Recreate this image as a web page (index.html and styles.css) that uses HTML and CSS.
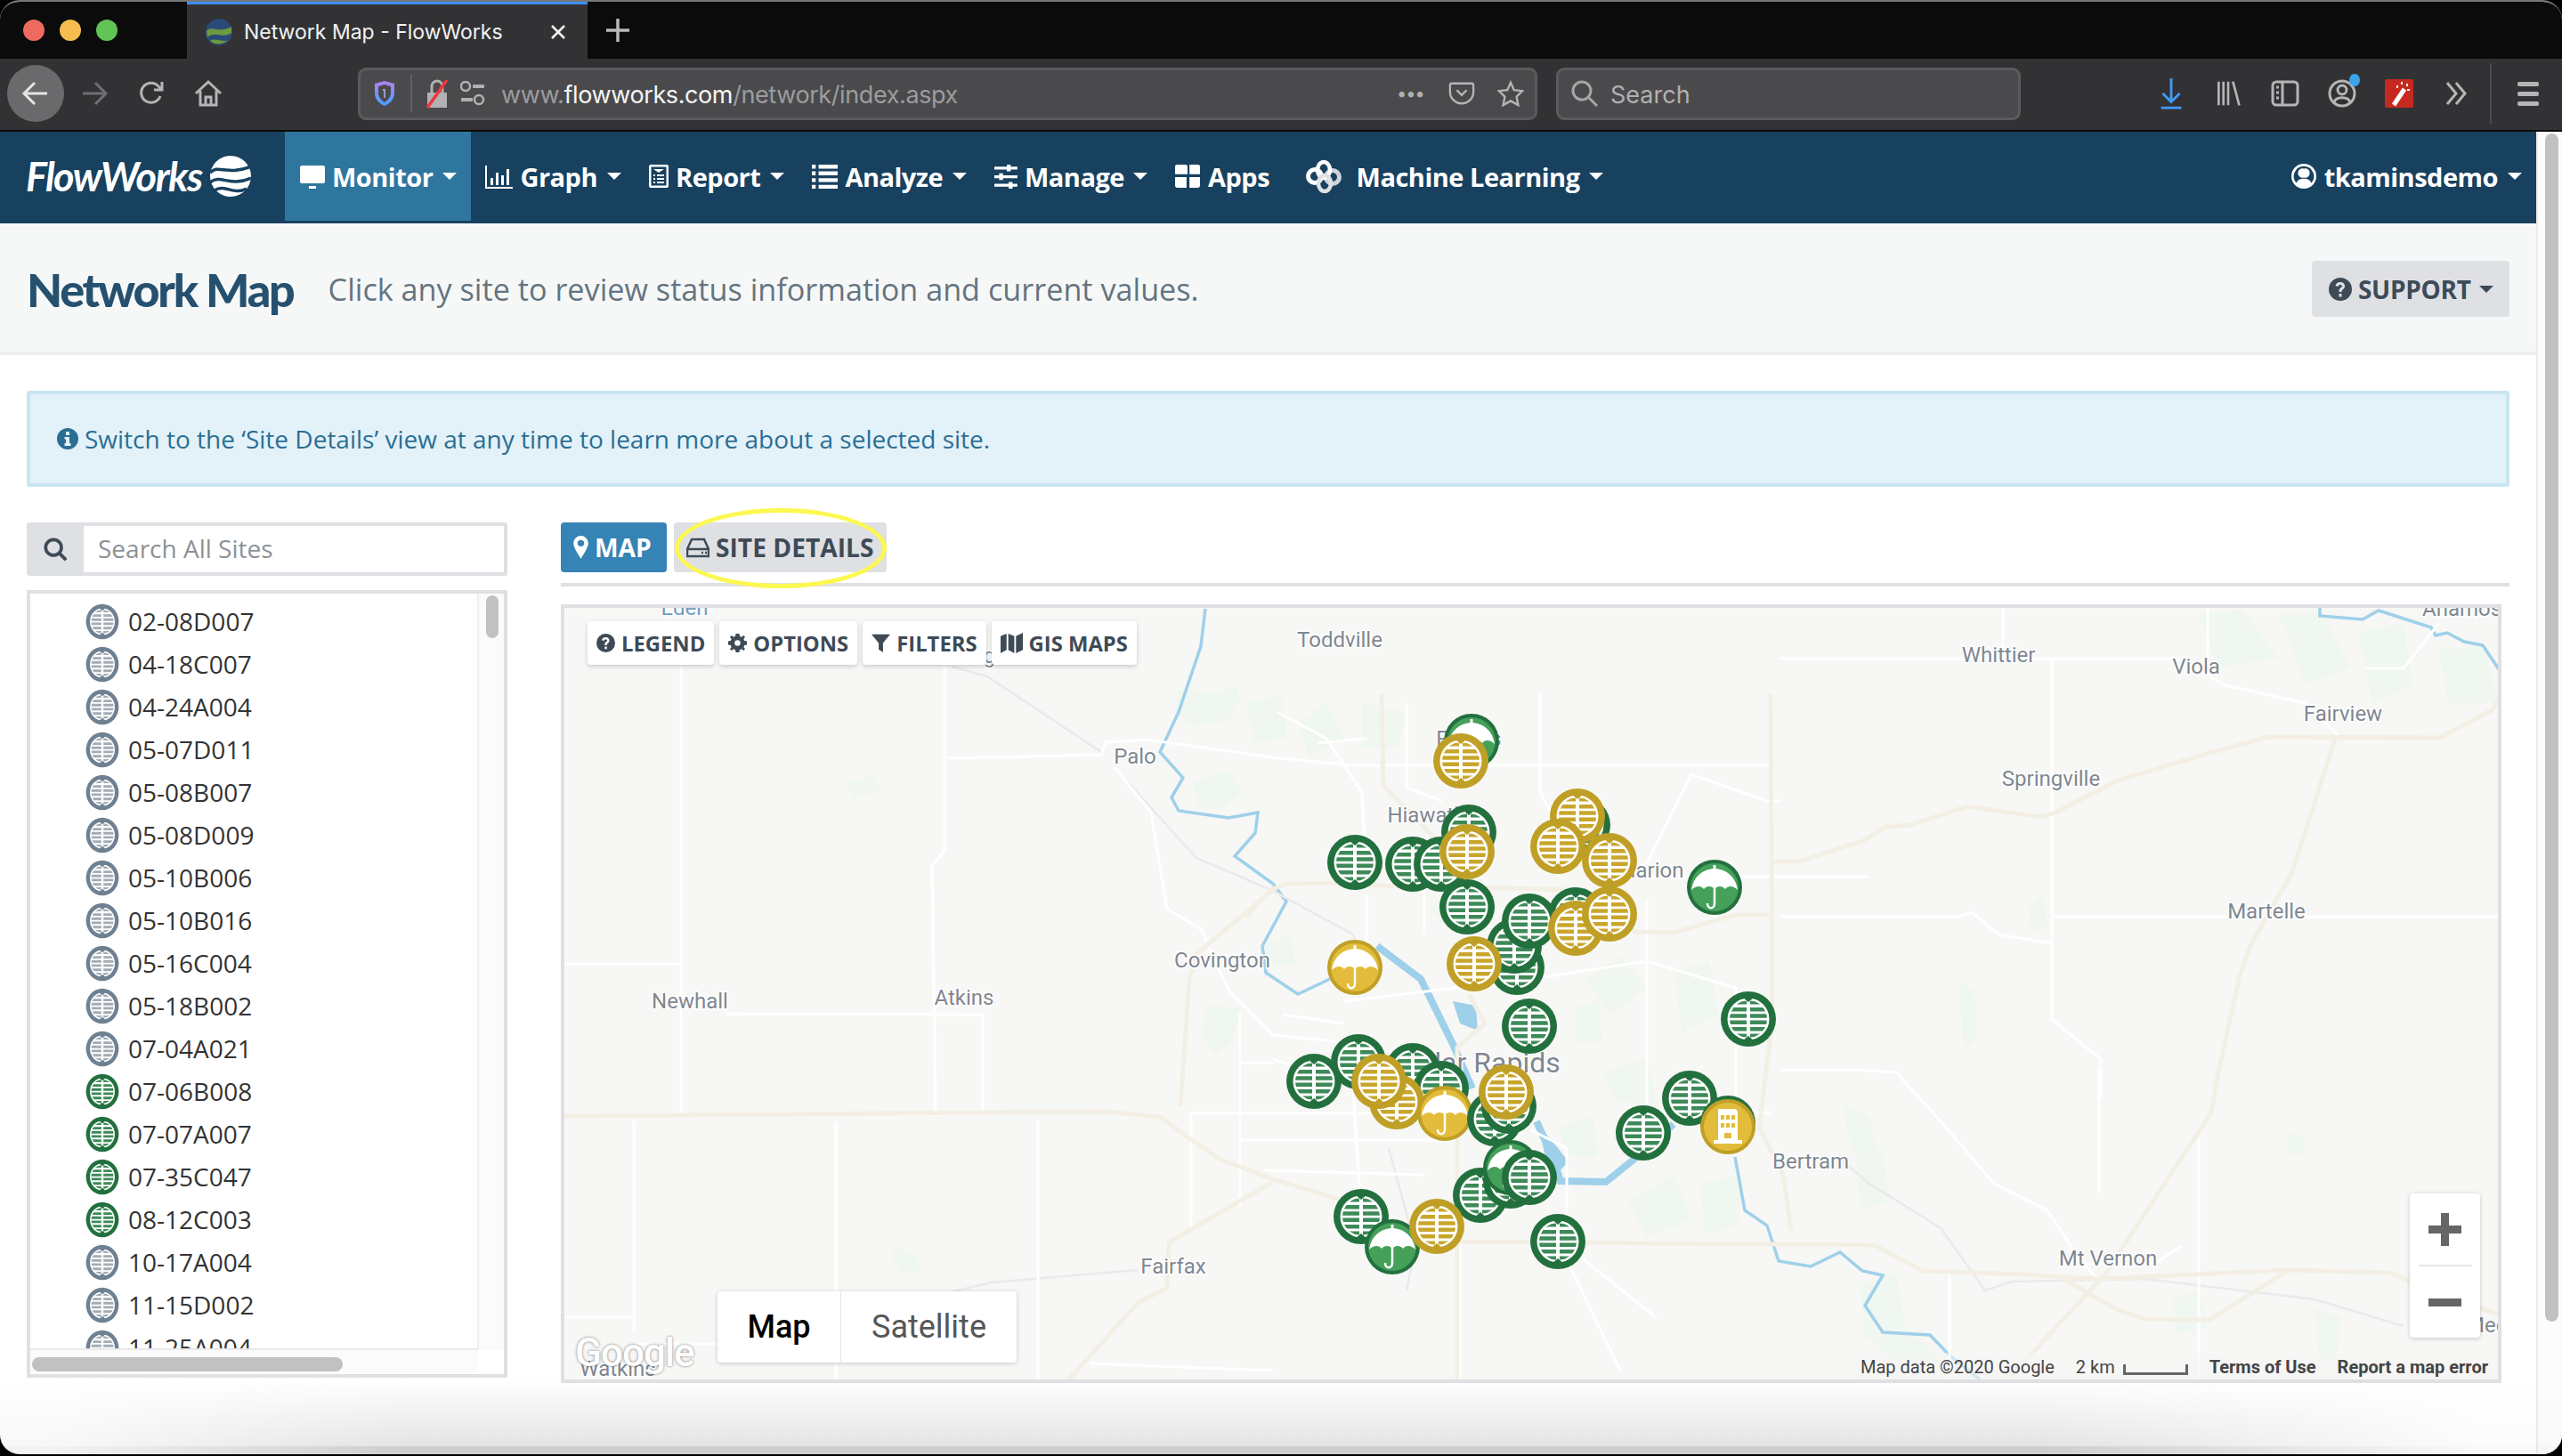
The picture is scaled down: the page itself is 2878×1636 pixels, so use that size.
FILE: index.html
```html
<!DOCTYPE html>
<html lang="en">
<head>
    <meta charset="UTF-8">
    <title>Network Map - FlowWorks</title>
    <link rel="stylesheet" href="styles.css">
</head>
<body>
<svg class="svg-defs" aria-hidden="true">
    <defs>
        <clipPath id="pin-clip"><circle r="21"/></clipPath>
        <g id="pin-grid">
            <circle class="pin-ring" r="31"/>
            <circle class="pin-face" r="23.500"/>
            <path class="pin-ring" d="M-7-25L0-19L7-25ZM-7 25L0 19L7 25Z"/>
            <g class="pin-bar" clip-path="url(#pin-clip)">
                <path d="M-22-20.500h20v4h-20zM2-20.500h20v4h-20zM-22-13h20v4.500h-20zM2-13h20v4.500h-20zM-22-5.700h20v4.500h-20zM2-5.700h20v4.500h-20zM-22 1.500h20v4.500h-20zM2 1.500h20v4.500h-20zM-22 9h20v4.500h-20zM2 9h20v4.500h-20zM-22 16.500h20v4h-20zM2 16.500h20v4h-20z"/>
            </g>
        </g>
        <g id="pin-umbrella">
            <circle class="pin-ring" r="31"/>
            <circle class="pin-fill" r="27"/>
            <path class="pin-face" d="M-1.500-25h3v4C13-20 24-12 26 3C21-2 15-2 12 2C9-2 3-2 0 2C-3-2-9-2-12 2C-15-2-21-2-26 3C-24-12-13-20-1.500-21Z"/>
            <path class="pin-handle" d="M0 0V18C0 25-8 25-8 18"/>
        </g>
        <g id="pin-building">
            <circle class="pin-ring" r="31"/>
            <circle class="pin-fill" r="27"/>
            <path class="pin-face" d="M-11-20H9L11-17V15H16V19H-16V15H-11Z"/>
            <path class="pin-fill" d="M-8-13h4v5h-4zM-2-13h4v5h-4zM4-13h4v5h-4zM-8-4h4v5h-4zM-2-4h4v5h-4zM4-4h4v5h-4zM-4 7h8v6h-8z"/>
        </g>
    </defs>
</svg>

<div class="window">
    <!-- browser chrome -->
    <div class="tabstrip">
        <div class="traffic">
            <span class="light red"></span>
            <span class="light amber"></span>
            <span class="light green"></span>
        </div>
        <div class="tab">
            <svg class="favicon" viewBox="0 0 32 32">
                <circle cx="16" cy="16" r="15" fill="#2b4a78"/>
                <path d="M2 15C8 8 14 18 30 10V17C20 24 10 14 3 22Z" fill="#6d9a3e"/>
                <path d="M6 26C12 22 20 28 26 25A15 15 0 0 1 6 26Z" fill="#6d9a3e"/>
            </svg>
            <span class="tab-title">Network Map - FlowWorks</span>
            <svg class="tab-close" viewBox="0 0 18 18"><path d="M2 2L16 16M16 2L2 16"/></svg>
        </div>
        <svg class="tab-new" viewBox="0 0 28 28"><path d="M14 1V27M1 14H27"/></svg>
    </div>

    <div class="toolbar">
        <div class="tb-btn back">
            <svg viewBox="0 0 32 32" class="tb-icon white"><path d="M29 16H4M15 4L3 16L15 28"/></svg>
        </div>
        <div class="tb-btn">
            <svg viewBox="0 0 32 32" class="tb-icon dim"><path d="M3 16H28M17 4L29 16L17 28"/></svg>
        </div>
        <div class="tb-btn">
            <svg viewBox="0 0 32 32" class="tb-icon"><path d="M26 19A11 11 0 1 1 24 8L28 12M28 3V12H19"/></svg>
        </div>
        <div class="tb-btn">
            <svg viewBox="0 0 32 32" class="tb-icon"><path d="M2 16L16 3L30 16M7 13V29H25V13M13 29V20H19V29"/></svg>
        </div>

        <div class="urlbar">
            <svg class="url-shield" viewBox="0 0 24 30">
                <defs><linearGradient id="shield-grad" x1="0" y1="0" x2="0" y2="1"><stop offset="0" stop-color="#b083f0"/><stop offset="1" stop-color="#45a1ff"/></linearGradient></defs>
                <path d="M12 1L23 4V15C23 22 17 27 12 29C7 27 1 22 1 15V4Z" fill="url(#shield-grad)"/>
                <path d="M12 5L19 7V15C19 19 15 23 12 25C9 23 5 19 5 15V7Z" fill="#4a4a4c"/>
                <path d="M10 10H13V20H11V12H10Z" fill="#9a9ac8"/>
            </svg>
            <span class="url-sep"></span>
            <svg class="url-lock" viewBox="0 0 28 36">
                <path d="M3 17H25V34H3Z" fill="#b1b1b3"/>
                <path d="M8 17V10A6 6 0 0 1 20 10V17" fill="none" stroke="#b1b1b3" stroke-width="3"/>
                <path d="M3 34L25 3" stroke="#f0353d" stroke-width="3.500"/>
            </svg>
            <svg class="url-perm" viewBox="0 0 28 28">
                <circle cx="6" cy="6" r="5" fill="none" stroke="#b1b1b3" stroke-width="2.500"/>
                <rect x="14" y="4" width="13" height="4" rx="1" fill="#b1b1b3"/>
                <rect x="1" y="19" width="13" height="4" rx="1" fill="#b1b1b3"/>
                <circle cx="21" cy="21" r="5" fill="none" stroke="#b1b1b3" stroke-width="2.500"/>
            </svg>
            <span class="url-text">www.<b>flowworks.com</b>/network/index.aspx</span>
            <span class="url-dots">•••</span>
            <svg class="url-icon pocket" viewBox="0 0 32 32"><path d="M4 4H28A2 2 0 0 1 30 6V14A14 14 0 0 1 2 14V6A2 2 0 0 1 4 4ZM10 12L16 18L22 12"/></svg>
            <svg class="url-icon star" viewBox="0 0 32 32"><path d="M16 3L20 12L30 13L23 20L25 30L16 25L7 30L9 20L2 13L12 12Z"/></svg>
        </div>

        <div class="searchbar">
            <svg class="search-glass" viewBox="0 0 32 32"><circle cx="13" cy="13" r="10"/><path d="M20 20L30 30"/></svg>
            <span>Search</span>
        </div>

        <div class="tb-btn first-right">
            <svg viewBox="0 0 32 40" class="tb-icon blue"><path d="M16 2V30M6 20L16 30L26 20M4 37H28"/></svg>
        </div>
        <div class="tb-btn">
            <svg viewBox="0 0 32 36" class="tb-icon thin"><path d="M4 3V33M10 3V33M16 3V33M22 3L30 33"/></svg>
        </div>
        <div class="tb-btn">
            <svg viewBox="0 0 32 32" class="tb-icon thin"><rect x="2" y="3" width="28" height="26" rx="4"/><path d="M13 3V29M6 9H9M6 15H9M6 21H9"/></svg>
        </div>
        <div class="tb-btn account">
            <svg viewBox="0 0 32 32" class="tb-icon thin"><circle cx="16" cy="16" r="14"/><circle cx="16" cy="12" r="5"/><path d="M7 26C9 19 23 19 25 26"/></svg>
            <span class="account-dot"></span>
        </div>
        <div class="tb-btn">
            <svg viewBox="0 0 32 32" class="ext-icon">
                <rect width="32" height="32" rx="2" fill="#c6291f"/>
                <path d="M10 29L22 11" stroke="#fff" stroke-width="5"/>
                <path d="M19 3V6M25 5V8M14 7V10M28 12H25" stroke="#fff" stroke-width="2"/>
            </svg>
        </div>
        <div class="tb-btn">
            <svg viewBox="0 0 32 32" class="tb-icon"><path d="M6 4L16 16L6 28M16 4L26 16L16 28"/></svg>
        </div>
        <span class="tb-sep"></span>
        <div class="tb-btn menu">
            <span class="bar"></span><span class="bar"></span><span class="bar"></span>
        </div>
    </div>

    <div class="page-wrap">
        <div class="page">
            <nav class="navbar">
                <a class="brand">
                    <span class="brand-text">FlowWorks</span>
                    <svg class="brand-globe" viewBox="0 0 46 46">
                        <circle cx="23" cy="23" r="23" fill="#fff"/>
                        <path d="M0 19C10 9 18 23 46 12M0 30C12 20 22 36 46 25M5 39C16 31 26 45 41 37" fill="none" stroke="#18415f" stroke-width="3.500"/>
                    </svg>
                </a>
                <a class="nav-item active">
                    <svg viewBox="0 0 28 28"><path d="M2 2H26A2 2 0 0 1 28 4V20A2 2 0 0 1 26 22H2A2 2 0 0 1 0 20V4A2 2 0 0 1 2 2ZM10 25H18V28H10Z"/></svg>
                    <span>Monitor</span><i class="caret"></i>
                </a>
                <a class="nav-item">
                    <svg viewBox="0 0 31 28"><path d="M0 2H2V26H31V28H0ZM6 16H9V24H6ZM12 10H15V24H12ZM18 13H21V24H18ZM24 6H27V24H24Z"/></svg>
                    <span>Graph</span><i class="caret"></i>
                </a>
                <a class="nav-item">
                    <svg viewBox="0 0 22 28"><path fill-rule="evenodd" d="M2 1H20A2 2 0 0 1 22 3V25A2 2 0 0 1 20 27H2A2 2 0 0 1 0 25V3A2 2 0 0 1 2 1ZM2.500 3.500V24.500H19.500V3.500ZM5 6H17L11 10ZM5 12H7V14H5ZM9 12H17V14H9ZM5 16H7V18H5ZM9 16H17V18H9ZM5 20H7V22H5ZM9 20H17V22H9Z"/></svg>
                    <span>Report</span><i class="caret"></i>
                </a>
                <a class="nav-item">
                    <svg viewBox="0 0 27 26"><path d="M0 1H4V5H0ZM7 1H27V5H7ZM0 8H4V12H0ZM7 8H27V12H7ZM0 15H4V19H0ZM7 15H27V19H7ZM0 22H4V26H0ZM7 22H27V26H7Z"/></svg>
                    <span>Analyze</span><i class="caret"></i>
                </a>
                <a class="nav-item">
                    <svg viewBox="0 0 24 26"><path d="M0 3H13V1H17V3H24V6H17V8H13V6H0ZM0 12H5V10H9V12H24V15H9V17H5V15H0ZM0 21H15V19H19V21H24V24H19V26H15V24H0Z"/></svg>
                    <span>Manage</span><i class="caret"></i>
                </a>
                <a class="nav-item apps">
                    <svg viewBox="0 0 26 26"><path d="M2 1H11A2 2 0 0 1 13 3V11H0V3A2 2 0 0 1 2 1ZM15 1H24A2 2 0 0 1 26 3V11H15ZM0 14H12V25H2A2 2 0 0 1 0 23ZM15 14H26V23A2 2 0 0 1 24 25H15Z"/></svg>
                    <span>Apps</span>
                </a>
                <a class="nav-item ml">
                    <svg viewBox="0 0 40 38" class="ml-icon">
                        <circle cx="10" cy="19" r="7.500" fill="none" stroke="#fff" stroke-width="5"/>
                        <circle cx="30" cy="20" r="7.500" fill="none" stroke="#cfd3d6" stroke-width="5"/>
                        <ellipse cx="20" cy="12" rx="7" ry="9" fill="none" stroke="#fff" stroke-width="4.500"/>
                        <ellipse cx="21" cy="27" rx="7" ry="9" fill="none" stroke="#dfe2e4" stroke-width="4.500"/>
                    </svg>
                    <span>Machine Learning</span><i class="caret"></i>
                </a>
                <a class="nav-item user">
                    <svg viewBox="0 0 30 30"><path fill-rule="evenodd" d="M15 0A15 15 0 1 1 15 30A15 15 0 1 1 15 0ZM15 3A12 12 0 0 0 6 23C8 19 11 18 15 18C19 18 22 19 24 23A12 12 0 0 0 15 3ZM15 6A5.500 5.500 0 1 1 15 16.500A5.500 5.500 0 1 1 15 6Z"/></svg>
                    <span>tkaminsdemo</span><i class="caret"></i>
                </a>
            </nav>

            <header class="page-header">
                <h1>Network Map</h1>
                <p class="page-sub">Click any site to review status information and current values.</p>
                <button class="support-btn">
                    <svg viewBox="0 0 26 26" class="btn-icon"><path fill-rule="evenodd" d="M13 0A13 13 0 1 1 13 26A13 13 0 1 1 13 0ZM13 5C9.500 5 8 7 7.500 9L10.500 10C11 8.500 11.500 8 13 8C14.500 8 15 8.800 15 9.500C15 11 11.500 11.500 11.500 15V16H14.500C14.500 13 18 13 18 9.500C18 7 16 5 13 5ZM11.500 18V21.500H14.500V18Z"/></svg>
                    <span>SUPPORT</span><i class="caret"></i>
                </button>
            </header>

            <main class="content">
                <div class="alert">
                    <svg viewBox="0 0 24 24" class="alert-icon"><path fill-rule="evenodd" d="M12 0A12 12 0 1 1 12 24A12 12 0 1 1 12 0ZM10 4V8H14V4ZM8.500 10V12.500H10V17H8.500V20H15.500V17H14V10Z"/></svg>
                    <span>Switch to the ‘Site Details’ view at any time to learn more about a selected site.</span>
                </div>

                <div class="columns">
                    <aside class="sidebar">
                        <div class="site-search">
                            <span class="site-search-addon">
                                <svg viewBox="0 0 28 28"><circle cx="12" cy="12" r="9.500"/><path d="M19 19L27 27"/></svg>
                            </span>
                            <input type="text" placeholder="Search All Sites">
                        </div>
                        <div class="site-box">
                            <ul class="site-list">
                                <li class="site gray"><svg viewBox="-32 -32 64 64" preserveAspectRatio="none"><use href="#pin-grid"/></svg>02-08D007</li>
                                <li class="site gray"><svg viewBox="-32 -32 64 64" preserveAspectRatio="none"><use href="#pin-grid"/></svg>04-18C007</li>
                                <li class="site gray"><svg viewBox="-32 -32 64 64" preserveAspectRatio="none"><use href="#pin-grid"/></svg>04-24A004</li>
                                <li class="site gray"><svg viewBox="-32 -32 64 64" preserveAspectRatio="none"><use href="#pin-grid"/></svg>05-07D011</li>
                                <li class="site gray"><svg viewBox="-32 -32 64 64" preserveAspectRatio="none"><use href="#pin-grid"/></svg>05-08B007</li>
                                <li class="site gray"><svg viewBox="-32 -32 64 64" preserveAspectRatio="none"><use href="#pin-grid"/></svg>05-08D009</li>
                                <li class="site gray"><svg viewBox="-32 -32 64 64" preserveAspectRatio="none"><use href="#pin-grid"/></svg>05-10B006</li>
                                <li class="site gray"><svg viewBox="-32 -32 64 64" preserveAspectRatio="none"><use href="#pin-grid"/></svg>05-10B016</li>
                                <li class="site gray"><svg viewBox="-32 -32 64 64" preserveAspectRatio="none"><use href="#pin-grid"/></svg>05-16C004</li>
                                <li class="site gray"><svg viewBox="-32 -32 64 64" preserveAspectRatio="none"><use href="#pin-grid"/></svg>05-18B002</li>
                                <li class="site gray"><svg viewBox="-32 -32 64 64" preserveAspectRatio="none"><use href="#pin-grid"/></svg>07-04A021</li>
                                <li class="site ok"><svg viewBox="-32 -32 64 64" preserveAspectRatio="none"><use href="#pin-grid"/></svg>07-06B008</li>
                                <li class="site ok"><svg viewBox="-32 -32 64 64" preserveAspectRatio="none"><use href="#pin-grid"/></svg>07-07A007</li>
                                <li class="site ok"><svg viewBox="-32 -32 64 64" preserveAspectRatio="none"><use href="#pin-grid"/></svg>07-35C047</li>
                                <li class="site ok"><svg viewBox="-32 -32 64 64" preserveAspectRatio="none"><use href="#pin-grid"/></svg>08-12C003</li>
                                <li class="site gray"><svg viewBox="-32 -32 64 64" preserveAspectRatio="none"><use href="#pin-grid"/></svg>10-17A004</li>
                                <li class="site gray"><svg viewBox="-32 -32 64 64" preserveAspectRatio="none"><use href="#pin-grid"/></svg>11-15D002</li>
                                <li class="site gray"><svg viewBox="-32 -32 64 64" preserveAspectRatio="none"><use href="#pin-grid"/></svg>11-25A004</li>
                            </ul>
                            <div class="list-vtrack"><span class="list-vthumb"></span></div>
                            <div class="list-htrack"><span class="list-hthumb"></span></div>
                        </div>
                    </aside>

                    <section class="map-col">
                        <div class="view-tabs">
                            <button class="view-tab primary">
                                <svg viewBox="0 0 18 28" class="btn-icon"><path fill-rule="evenodd" d="M9 0A9 9 0 0 1 18 9C18 15 11 24 9 28C7 24 0 15 0 9A9 9 0 0 1 9 0ZM9 5A4 4 0 1 0 9 13A4 4 0 1 0 9 5Z"/></svg>
                                <span>MAP</span>
                            </button>
                            <button class="view-tab">
                                <svg viewBox="0 0 26 24" class="btn-icon outline"><path d="M6 3H20L25 14V22H1V14ZM1 14H25M17 18H19M21 18H23"/></svg>
                                <span>SITE DETAILS</span>
                                <i class="highlight"></i>
                            </button>
                        </div>

                        <div class="map">
                            <svg class="map-canvas" viewBox="634 683 2172 867">
                                <!-- woods -->
                                <g class="woods">
                                    <path d="M1324 775L1368 778L1390 770L1392 790L1380 810L1340 815L1320 800Z"/>
                                    <path d="M1400 790L1440 780L1446 830L1410 835Z"/>
                                    <path d="M1340 880L1380 865L1395 890L1370 910L1345 905Z"/>
                                    <path d="M1420 1060L1450 1050L1455 1085L1425 1085Z"/>
                                    <path d="M1355 1130L1392 1132L1385 1170L1365 1185L1350 1165Z"/>
                                    <path d="M1460 810L1490 790L1510 830L1470 850Z"/>
                                    <path d="M1530 790L1580 800L1570 840L1530 840Z"/>
                                    <path d="M1605 1015L1650 1005L1650 1030L1620 1040Z"/>
                                    <path d="M1780 1100L1820 1075L1850 1110L1810 1140Z"/>
                                    <path d="M1880 1090L1920 1080L1930 1140L1890 1160Z"/>
                                    <path d="M1770 1130L1795 1125L1800 1170L1772 1172Z"/>
                                    <path d="M1800 1205L1850 1190L1862 1240L1815 1238Z"/>
                                    <path d="M1750 1265L1790 1255L1795 1300L1762 1300Z"/>
                                    <path d="M1830 1350L1880 1320L1900 1370L1850 1390Z"/>
                                    <path d="M1910 1330L1960 1320L1950 1380L1915 1385Z"/>
                                    <path d="M2085 1300L2115 1290L2122 1350L2090 1360Z"/>
                                    <path d="M2090 1445L2130 1430L2140 1490L2180 1530L2130 1530L2095 1500Z"/>
                                    <path d="M2200 1100L2218 1115L2220 1170L2206 1180Z"/>
                                    <path d="M2470 690L2520 685L2560 740L2490 750Z"/>
                                    <path d="M2560 690L2610 690L2640 750L2590 770Z"/>
                                    <path d="M2650 710L2700 700L2710 770L2665 790Z"/>
                                    <path d="M2740 730L2790 725L2806 790L2750 790Z"/>
                                    <path d="M2070 1240L2100 1255L2110 1300L2080 1295Z"/>
                                    <path d="M2570 1270L2590 1280L2585 1300L2570 1295Z"/>
                                    <path d="M2280 1020L2295 1005L2300 1040L2282 1048Z"/>
                                    <path d="M2440 1460L2470 1450L2480 1490L2445 1500Z"/>
                                    <path d="M2600 1470L2630 1480L2625 1530L2605 1525Z"/>
                                    <path d="M1000 1400L1030 1410L1036 1430L1010 1430Z"/>
                                    <path d="M950 880L980 872L990 890L960 896Z"/>
                                </g>
                                <!-- rivers -->
                                <g class="river">
                                    <path d="M1354 684L1349 726L1324 800L1303 845L1329 874L1316 896L1324 911L1380 919L1413 913L1410 936L1387 962L1430 993L1445 1013L1418 1063L1422 1093L1458 1117L1494 1100"/>
                                    <path class="wide" d="M1547 1063L1596 1100L1632 1173L1654 1223"/>
                                    <path class="wide" d="M1726 1260L1744 1300L1753 1327L1804 1328L1835 1303L1880 1263"/>
                                    <path d="M1949 1300L1960 1360L1985 1377L1998 1417L2034 1423L2067 1407L2092 1428L2115 1433L2095 1467L2115 1497L2168 1500L2190 1523L2224 1550"/>
                                    <path d="M2606 683L2606 692L2654 696L2672 686L2731 705L2736 714L2749 711L2768 721L2789 725L2807 752"/>
                                </g>
                                <path class="lake" d="M1632 1125L1658 1130L1660 1158L1640 1150ZM1728 1264L1750 1290L1762 1305L1750 1318L1736 1300Z"/>
                                <!-- local roads -->
                                <g class="road-gray">
                                    <path d="M1069 749L1109 760L1237 845"/>
                                    <path d="M1268 880L1344 964L1430 1001L1520 1050L1540 1100"/>
                                    <path d="M1063 1453L1114 1441L1278 1427"/>
                                    <path d="M2070 1305L2100 1330L2180 1380L2230 1450L2260 1440L2410 1437L2600 1460L2700 1490"/>
                                    <path d="M1560 1290L1590 1400L1580 1450"/>
                                </g>
                                <g class="road">
                                    <path d="M765 749V1251M1061 749V956L1047 973L1051 1251"/>
                                    <path d="M634 1083H765M816 1139L1104 1140V1248"/>
                                    <path d="M1062 852L1237 848L1242 834L1288 831L1430 851L1520 860H1990"/>
                                    <path d="M1252 862L1293 913L1311 1021L1349 1044L1380 1112L1430 1163L1500 1170"/>
                                    <path d="M712 1260V1498M939 1260V1555M1166 1260V1555"/>
                                    <path d="M634 1480H714M714 1510H806M1224 1532L1430 1540"/>
                                    <path d="M1338 1251V1379M1393 1138V1356M1393 1194H1430M1338 1251H1640M1393 1281H1640"/>
                                    <path d="M1430 1190L1520 1220L1530 1380M1420 1315L1600 1320M1440 1140L1510 1150"/>
                                    <path d="M1435 800L1490 830L1530 890L1535 1000M1480 835L1535 830M1580 790V885L1620 900"/>
                                    <path d="M1535 1005V1060M1600 1000V1050M1730 780V890L1760 950L1800 970L1850 985H2100"/>
                                    <path d="M1800 1000L1850 970L1900 870L1985 900H2000M1850 1010V1250H1990"/>
                                    <path d="M1510 1125L1720 1100L1850 1080L1950 1110L1950 1250"/>
                                    <path d="M1640 1395V1550M1750 1395L1820 1540M1720 1270L1760 1290V1400L1860 1480"/>
                                    <path d="M2250 683V740M2000 740H2446L2500 770L2590 790L2630 830M2480 683V740M2658 751H2700L2740 700M2305 740V1060"/>
                                    <path d="M2000 1030H2200L2215 1025L2245 1050L2305 1060M2305 1030H2806M2305 1060V1145L2335 1170L2360 1190V1235"/>
                                    <path d="M2000 1202H2080L2130 1205L2180 1260L2240 1330L2300 1360L2340 1420L2360 1440M2358 1200V1340"/>
                                    <path d="M2470 1280V1550M2190 1430V1550M2310 1410L2330 1420L2420 1420L2450 1400"/>
                                </g>
                                <!-- highways -->
                                <g class="highway">
                                    <path d="M634 1254L1242 1249L1303 1255L1349 1288L1369 1302L1430 1325L1503 1347L1600 1390L1641 1395L2106 1399L2160 1428L2274 1432L2358 1437L2571 1427L2683 1430L2806 1477"/>
                                    <path d="M1552 780L1554 883L1610 940L1652 1000M1400 1030L1427 1000L1445 993L1498 992L1552 995L1780 1000L1837 1047L1880 1048L1949 1028L1989 1028"/>
                                    <path d="M1430 1000L1344 1072L1336 1101L1326 1243"/>
                                    <path d="M1989 780L1991 1147L1976 1267L2003 1320L2012 1383"/>
                                    <path d="M1990 968H2021L2093 945L2118 929L2146 927L2210 906L2291 918L2307 914L2379 877L2482 846L2548 828L2741 829L2799 798L2818 768"/>
                                    <path d="M2624 828L2574 982L2529 1060L2516 1096L2493 1200L2484 1250L2364 1433L2308 1493L2274 1530L2252 1553"/>
                                    <path d="M2314 1435L2381 1473L2409 1482L2482 1483L2571 1427"/>
                                    <path d="M1650 1117L1668 1150L1637 1177L1637 1550"/>
                                    <path d="M1430 1328L1313 1396L1311 1447L1278 1464L1196 1555"/>
                                </g>

                                <!-- place names -->
                                <g class="place">
                                    <text x="769" y="691" class="water-name">Eden</text>
                                    <text x="1505" y="727">Toddville</text>
                                    <text x="1062" y="745">Shellsburg</text>
                                    <text x="2245" y="744">Whittier</text>
                                    <text x="2467" y="757">Viola</text>
                                    <text x="2632" y="810">Fairview</text>
                                    <text x="2721" y="692" class="start">Anamosa</text>
                                    <text x="2304" y="883">Springville</text>
                                    <text x="2546" y="1032">Martelle</text>
                                    <text x="1275" y="858">Palo</text>
                                    <text x="1650" y="838">Robins</text>
                                    <text x="1609" y="924">Hiawatha</text>
                                    <text x="1854" y="986">Marion</text>
                                    <text x="1373" y="1087">Covington</text>
                                    <text x="775" y="1133">Newhall</text>
                                    <text x="1083" y="1129">Atkins</text>
                                    <text x="1318" y="1431">Fairfax</text>
                                    <text x="2034" y="1313">Bertram</text>
                                    <text x="2368" y="1422">Mt Vernon</text>
                                    <text x="694" y="1546">Watkins</text>
                                    <text x="2770" y="1497" class="start">Mechanicsville</text>
                                    <text x="1658" y="1205" class="city">Cedar Rapids</text>
                                </g>

                                <!-- site pins -->
                                <g class="pin-green">
                                    <use href="#pin-umbrella" x="1653" y="833"/>
                                </g>
                                <g class="pin-gold"><use href="#pin-grid" x="1641" y="855"/></g>
                                <g class="pin-green">
                                    <use href="#pin-grid" x="1522" y="969"/>
                                    <use href="#pin-grid" x="1587" y="971"/>
                                    <use href="#pin-grid" x="1619" y="971"/>
                                    <use href="#pin-grid" x="1650" y="935"/>
                                    <use href="#pin-grid" x="1778" y="927"/>
                                </g>
                                <g class="pin-gold">
                                    <use href="#pin-grid" x="1648" y="957"/>
                                    <use href="#pin-grid" x="1772" y="917"/>
                                    <use href="#pin-grid" x="1750" y="951"/>
                                    <use href="#pin-grid" x="1808" y="967"/>
                                </g>
                                <g class="pin-green">
                                    <use href="#pin-grid" x="1648" y="1019"/>
                                    <use href="#pin-grid" x="1704" y="1087"/>
                                    <use href="#pin-grid" x="1701" y="1063"/>
                                    <use href="#pin-grid" x="1770" y="1028"/>
                                    <use href="#pin-grid" x="1718" y="1035"/>
                                </g>
                                <g class="pin-gold">
                                    <use href="#pin-grid" x="1656" y="1083"/>
                                    <use href="#pin-grid" x="1770" y="1043"/>
                                    <use href="#pin-grid" x="1808" y="1027"/>
                                    <use href="#pin-umbrella" x="1522" y="1087"/>
                                </g>
                                <g class="pin-green">
                                    <use href="#pin-umbrella" x="1926" y="997"/>
                                    <use href="#pin-grid" x="1718" y="1153"/>
                                    <use href="#pin-grid" x="1964" y="1145"/>
                                    <use href="#pin-grid" x="1526" y="1193"/>
                                    <use href="#pin-grid" x="1476" y="1215"/>
                                    <use href="#pin-grid" x="1587" y="1203"/>
                                    <use href="#pin-grid" x="1619" y="1223"/>
                                </g>
                                <g class="pin-gold">
                                    <use href="#pin-grid" x="1569" y="1238"/>
                                    <use href="#pin-grid" x="1549" y="1215"/>
                                    <use href="#pin-umbrella" x="1623" y="1251"/>
                                </g>
                                <g class="pin-green">
                                    <use href="#pin-grid" x="1679" y="1257"/>
                                    <use href="#pin-grid" x="1695" y="1243"/>
                                </g>
                                <g class="pin-gold"><use href="#pin-grid" x="1692" y="1227"/></g>
                                <g class="pin-green">
                                    <use href="#pin-grid" x="1663" y="1343"/>
                                    <use href="#pin-grid" x="1697" y="1327"/>
                                    <use href="#pin-umbrella" x="1697" y="1312"/>
                                    <use href="#pin-grid" x="1718" y="1323"/>
                                    <use href="#pin-grid" x="1750" y="1395"/>
                                    <use href="#pin-grid" x="1529" y="1367"/>
                                    <use href="#pin-umbrella" x="1564" y="1401"/>
                                    <use href="#pin-grid" x="1898" y="1234"/>
                                    <use href="#pin-grid" x="1846" y="1273"/>
                                    <use href="#pin-grid" x="1941" y="1262"/>
                                </g>
                                <g class="pin-gold">
                                    <use href="#pin-grid" x="1614" y="1378"/>
                                    <use href="#pin-building" x="1941" y="1266"/>
                                </g>
                            </svg>

                            <div class="map-tools">
                                <button class="map-tool">
                                    <svg viewBox="0 0 26 26"><path fill-rule="evenodd" d="M13 0A13 13 0 1 1 13 26A13 13 0 1 1 13 0ZM13 5C9.500 5 8 7 7.500 9L10.500 10C11 8.500 11.500 8 13 8C14.500 8 15 8.800 15 9.500C15 11 11.500 11.500 11.500 15V16H14.500C14.500 13 18 13 18 9.500C18 7 16 5 13 5ZM11.500 18V21.500H14.500V18Z"/></svg>
                                    <span>LEGEND</span>
                                </button>
                                <button class="map-tool">
                                    <svg viewBox="0 0 26 26"><path fill-rule="evenodd" d="M10.500 0H15.500L16 3.500L18.500 4.500L21.500 2.500L23.500 4.500L21.500 7.500L22.500 10L26 10.500V15.500L22.500 16L21.500 18.500L23.500 21.500L21.500 23.500L18.500 21.500L16 22.500L15.500 26H10.500L10 22.500L7.500 21.500L4.500 23.500L2.500 21.500L4.500 18.500L3.500 16L0 15.500V10.500L3.500 10L4.500 7.500L2.500 4.500L4.500 2.500L7.500 4.500L10 3.500ZM13 9A4 4 0 1 0 13 17A4 4 0 1 0 13 9Z"/></svg>
                                    <span>OPTIONS</span>
                                </button>
                                <button class="map-tool">
                                    <svg viewBox="0 0 26 26"><path d="M0 1H26L16 13V26L10 22V13Z"/></svg>
                                    <span>FILTERS</span>
                                </button>
                                <button class="map-tool gis">
                                    <svg viewBox="0 0 26 26"><path d="M0 5L7 2V21L0 25ZM9 2L16 5V25L9 21ZM18 5L26 1V21L18 25Z"/></svg>
                                    <span>GIS MAPS</span>
                                </button>
                            </div>

                            <span class="google-mark">Google</span>

                            <div class="map-type">
                                <span class="map-type-btn selected">Map</span>
                                <span class="map-type-btn">Satellite</span>
                            </div>

                            <div class="zoom-ctrl">
                                <span class="zoom-btn"><i class="zoom-h"></i><i class="zoom-v"></i></span>
                                <span class="zoom-div"></span>
                                <span class="zoom-btn"><i class="zoom-h"></i></span>
                            </div>

                            <div class="map-footer">
                                <span>Map data ©2020 Google</span>
                                <span class="scale"><span>2 km</span><i class="scale-bar"></i></span>
                                <b>Terms of Use</b>
                                <b>Report a map error</b>
                            </div>
                        </div>
                    </section>
                </div>
            </main>
        </div>
        <div class="page-scrollbar"><span class="page-thumb"></span></div>
    </div>
    <div class="bottom-shade"></div>
</div>
</body>
</html>
```

FILE: styles.css
```css
* {
    box-sizing: border-box;
}
html, body {
    margin: 0;
    padding: 0;
    background: #000;
}
body {
    width: 2878px;
    height: 1636px;
    overflow: hidden;
    font-family: "Open Sans", sans-serif;
    color: #333;
}
.svg-defs {
    position: absolute;
    width: 0;
    height: 0;
}
.window {
    position: relative;
    width: 2878px;
    height: 1634px;
    background: #fff;
    border-radius: 22px;
    overflow: hidden;
    border-top: 2px solid #77777a;
}

/* browser chrome */
.tabstrip {
    display: flex;
    align-items: stretch;
    height: 64px;
    background: #0b0b0c;
}
.traffic {
    display: flex;
    align-items: center;
    gap: 17px;
    width: 210px;
    padding-left: 26px;
}
.light {
    width: 24px;
    height: 24px;
    border-radius: 50%;
}
.light.red { background: #ee6a5f; }
.light.amber { background: #f5bd4f; }
.light.green { background: #61c454; }
.tab {
    display: flex;
    align-items: center;
    width: 450px;
    padding-left: 20px;
    background: #323234;
    border-top: 3px solid #3d8ffb;
    color: #f2f2f2;
    font-family: "Inter", sans-serif;
    font-size: 23px;
}
.favicon {
    width: 32px;
    height: 32px;
    margin-right: 12px;
}
.tab-title {
    width: 344px;
    white-space: nowrap;
}
.tab-close {
    width: 18px;
    height: 18px;
    fill: none;
    stroke: #f2f2f2;
    stroke-width: 2.500;
}
.tab-new {
    width: 28px;
    height: 28px;
    margin: 18px 0 0 20px;
    fill: none;
    stroke: #b9b9bb;
    stroke-width: 3.500;
}
.toolbar {
    display: flex;
    align-items: center;
    height: 82px;
    padding: 0 0 2px 8px;
    background: #323234;
    border-bottom: 2px solid #0b0b0c;
}
.tb-btn {
    position: relative;
    display: flex;
    align-items: center;
    justify-content: center;
    flex: none;
    width: 64px;
    height: 64px;
}
.tb-btn.back {
    margin-right: 2px;
    border-radius: 50%;
    background: #6a6a6c;
}
.tb-icon {
    width: 32px;
    height: 32px;
    fill: none;
    stroke: #b5b5b7;
    stroke-width: 3;
}
.tb-icon.white { stroke: #e4e4e4; }
.tb-icon.dim { stroke: #6f6f71; }
.tb-icon.blue { stroke: #3f9bfa; height: 38px; }
.tb-icon.thin { stroke-width: 3; }
.ext-icon {
    width: 32px;
    height: 32px;
}
.account-dot {
    position: absolute;
    top: 10px;
    right: 12px;
    width: 12px;
    height: 14px;
    border-radius: 50%;
    background: #3aa4ec;
}
.urlbar, .searchbar {
    display: flex;
    align-items: center;
    flex: none;
    height: 59px;
    background: #4a4a4c;
    border: 3px solid #5b5b5d;
    border-radius: 9px;
    color: #b1b1b3;
    font-family: "Inter", sans-serif;
    font-size: 27px;
}
.urlbar {
    width: 1325px;
    margin-left: 136px;
    padding-left: 15px;
}
.url-shield {
    width: 24px;
    height: 30px;
}
.url-sep {
    width: 2px;
    height: 42px;
    margin: 0 14px 0 17px;
    background: #5f5f61;
}
.url-lock {
    width: 28px;
    height: 36px;
}
.url-perm {
    width: 28px;
    height: 28px;
    margin-left: 12px;
}
.url-text {
    margin: 2px 0 0 18px;
    width: 1006px;
    letter-spacing: -0.4px;
    color: #9c9c9e;
}
.url-text b {
    font-weight: 400;
    color: #f4f4f4;
}
.url-dots {
    width: 36px;
    font-size: 20px;
    letter-spacing: -1px;
}
.url-icon {
    width: 30px;
    height: 30px;
    fill: none;
    stroke: #b5b5b7;
    stroke-width: 2.500;
}
.url-icon.pocket { margin-left: 22px; }
.url-icon.star { margin-left: 25px; }
.searchbar {
    width: 522px;
    margin-left: 21px;
    padding-left: 13px;
}
.searchbar span {
    margin-top: 2px;
}
.search-glass {
    width: 32px;
    height: 32px;
    margin-right: 13px;
    fill: none;
    stroke: #a5a5a7;
    stroke-width: 3;
}
.first-right {
    margin-left: 137px;
}
.tb-sep {
    width: 2px;
    height: 68px;
    margin-left: 6px;
    background: #4c4c4e;
}
.tb-btn.menu {
    flex-direction: column;
    gap: 6px;
    margin-left: 9px;
}
.bar {
    width: 24px;
    height: 5px;
    border-radius: 2px;
    background: #b5b5b7;
}

/* page */
.page-wrap {
    display: flex;
}
.page {
    width: 2849px;
    flex: none;
}
.page-scrollbar {
    flex: 1;
    height: 1490px;
    padding: 2px 5px 0 8px;
    background: #fcfcfc;
    border-left: 2px solid #ebebeb;
}
.page-thumb {
    display: block;
    width: 15px;
    height: 1335px;
    border-radius: 8px;
    background: #c1c1c1;
}
.navbar {
    display: flex;
    align-items: flex-start;
    height: 103px;
    background: #18415f;
    color: #fff;
}
.brand {
    display: flex;
    align-items: center;
    width: 320px;
    height: 100px;
    padding-left: 29px;
}
.brand-text {
    font-family: "Lato", sans-serif;
    font-size: 45px;
    font-style: italic;
    font-weight: 700;
    letter-spacing: -1.500px;
}
.brand-globe {
    width: 46px;
    height: 46px;
    margin-left: 9px;
}
.nav-item {
    display: flex;
    align-items: center;
    gap: 8.500px;
    height: 100px;
    padding: 0 15.500px;
    font-size: 29px;
    font-weight: 700;
    letter-spacing: -0.5px;
}
.nav-item svg {
    width: auto;
    height: 28px;
    fill: #fff;
}
.nav-item.active {
    padding: 0 16.500px;
    background: #2f769f;
}
.nav-item.ml {
    margin-left: 10px;
}
.nav-item.ml .ml-icon {
    width: 40px;
    height: 38px;
    margin-right: 8px;
}
.nav-item.user {
    margin-left: auto;
    padding-right: 16.500px;
}
.caret {
    width: 0;
    height: 0;
    margin-left: 2px;
    border-left: 8px solid transparent;
    border-right: 8px solid transparent;
    border-top: 8px solid currentColor;
}
.page-header {
    display: flex;
    align-items: center;
    height: 148px;
    padding: 3px 30px 0;
    background: #f6f8f8;
    border-bottom: 4px solid #eeeff1;
}
h1 {
    margin: 0 39px 0 0;
    font-family: "Lato", sans-serif;
    font-size: 52px;
    font-weight: 900;
    letter-spacing: -2.200px;
    color: #26506f;
}
.page-sub {
    margin: 0;
    font-size: 34.200px;
    color: #657480;
}
.support-btn {
    display: flex;
    align-items: center;
    gap: 7px;
    width: 222px;
    height: 63px;
    margin-left: auto;
    padding: 0 0 0 19px;
    border: 0;
    border-radius: 4px;
    background: #dfe0e4;
    color: #3e4b57;
    font-family: inherit;
    font-size: 28px;
    font-weight: 700;
    letter-spacing: -0.3px;
}
.btn-icon {
    width: 26px;
    height: 26px;
    fill: currentColor;
}
.btn-icon.outline {
    fill: none;
    stroke: currentColor;
    stroke-width: 2.500;
}
.content {
    padding: 40px 30px 0;
}
.alert {
    display: flex;
    align-items: center;
    gap: 7px;
    height: 108px;
    padding-left: 30px;
    background: #e3f1f9;
    border: 4px solid #c8e6f2;
    border-radius: 3px;
    color: #2a6f93;
    font-size: 28px;
}
.alert-icon {
    width: 24px;
    height: 24px;
    fill: currentColor;
}
.columns {
    display: flex;
    gap: 60px;
    margin-top: 40px;
}

/* site list */
.sidebar {
    flex: none;
    width: 540px;
}
.site-search {
    display: flex;
    height: 60px;
    background: #dfe0e4;
    border-radius: 3px;
    padding: 4px 4px 4px 0;
}
.site-search-addon {
    display: flex;
    align-items: center;
    justify-content: center;
    width: 64px;
}
.site-search-addon svg {
    width: 26px;
    height: 28px;
    fill: none;
    stroke: #3e4b57;
    stroke-width: 4;
}
.site-search input {
    flex: 1;
    min-width: 0;
    padding: 0 16px 2px;
    border: 0;
    background: #fff;
    font-family: inherit;
    font-size: 28px;
}
.site-search input::placeholder {
    color: #8d9196;
    opacity: 1;
}
.site-box {
    position: relative;
    height: 885px;
    margin-top: 16px;
    border: 4px solid #dfe0e4;
    overflow: hidden;
    background: #fff;
}
.site-list {
    margin: 0;
    padding: 7px 0 0 62px;
    list-style: none;
}
.site {
    display: flex;
    align-items: center;
    gap: 10px;
    height: 48px;
    font-size: 28px;
    color: #333;
}
.site svg {
    width: 38px;
    height: 41px;
}
.site.gray {
    --ring: #6e8192;
    --bar: #a3acb4;
}
.site.ok {
    --ring: #23703f;
    --bar: #3d8a58;
}
.list-vtrack {
    position: absolute;
    top: 0;
    right: 0;
    bottom: 0;
    width: 30px;
    padding: 2px 0 0 8px;
    background: #fbfbfb;
    border-left: 2px solid #efeff1;
}
.list-vthumb {
    display: block;
    width: 14px;
    height: 48px;
    border-radius: 7px;
    background: #c1c1c1;
}
.list-htrack {
    position: absolute;
    left: 0;
    right: 30px;
    bottom: 1px;
    height: 28px;
    padding: 8px 0 0 2px;
    background: #fbfbfb;
    border-top: 2px solid #e9e9eb;
}
.list-hthumb {
    display: block;
    width: 349px;
    height: 16px;
    border-radius: 8px;
    background: #c1c1c1;
}
.list-htrack::after {
    content: "";
    position: absolute;
    top: 0;
    right: -30px;
    width: 30px;
    height: 28px;
    background: #fff;
}

/* map */
.map-col {
    flex: 1;
    min-width: 0;
}
.view-tabs {
    display: flex;
    gap: 8px;
    height: 72px;
    padding-bottom: 16px;
    border-bottom: 4px solid #dfe0e4;
}
.view-tab {
    position: relative;
    display: flex;
    align-items: center;
    gap: 7px;
    width: 239px;
    height: 56px;
    padding: 0 0 0 14px;
    border: 0;
    border-radius: 4px;
    background: #dfe0e4;
    color: #3e4b57;
    font-family: inherit;
    font-size: 28.200px;
    font-weight: 700;
    white-space: nowrap;
}
.view-tab.primary {
    width: 119px;
    background: #3683b5;
    color: #fff;
}
.view-tab.primary .btn-icon {
    width: 17px;
}
.highlight {
    position: absolute;
    left: 1px;
    top: -16px;
    width: 238px;
    height: 90px;
    border: 5px solid #fdf84f;
    border-radius: 50%;
}
.map {
    position: relative;
    width: 2180px;
    height: 875px;
    margin-top: 20px;
    border: 4px solid #dfe0e4;
    background: #f7f7f5;
    overflow: hidden;
}
.map-canvas {
    display: block;
    width: 2172px;
    height: 867px;
}
.pin-ring { fill: var(--ring); }
.pin-face { fill: #fff; }
.pin-bar { fill: var(--bar); }
.pin-fill { fill: var(--fill); }
.pin-handle {
    fill: none;
    stroke: #fff;
    stroke-width: 2.500;
}
.pin-green {
    --ring: #23703f;
    --bar: #3d8a58;
    --fill: #45a05a;
}
.pin-gold {
    --ring: #c09f26;
    --bar: #c9a62b;
    --fill: #e2bc3a;
}
.woods { fill: #eff7f0; }
.river {
    fill: none;
    stroke: #9fd0ea;
    stroke-width: 3.500;
}
.river .wide { stroke-width: 8; }
.lake { fill: #9fd0ea; }
.road-gray {
    fill: none;
    stroke: #e9eaeb;
    stroke-width: 2.500;
}
.road {
    fill: none;
    stroke: #fff;
    stroke-width: 3;
}
.highway {
    fill: none;
    stroke: #f3efe4;
    stroke-width: 5;
}
.place text {
    font-family: "Roboto", sans-serif;
    font-size: 24px;
    text-anchor: middle;
    fill: #7f8791;
    stroke: #fff;
    stroke-width: 3;
    paint-order: stroke;
}
.place .start { text-anchor: start; }
.place .city { font-size: 32px; }
.place .water-name { fill: #6f9dc0; }
.map-tools {
    position: absolute;
    top: 15px;
    left: 26px;
    display: flex;
    gap: 6px;
}
.map-tool {
    display: flex;
    align-items: center;
    gap: 7px;
    height: 49px;
    padding: 0 10px;
    border: 0;
    border-radius: 4px;
    background: #fff;
    box-shadow: 0 2px 5px rgba(0,0,0,.18);
    color: #3e4b57;
    font-family: inherit;
    font-size: 23.800px;
    font-weight: 700;
    white-space: nowrap;
}
.map-tool svg {
    width: 21px;
    height: 21px;
    fill: currentColor;
}
.map-tool.gis svg {
    width: 25px;
    height: 25px;
}
.google-mark {
    position: absolute;
    left: 12px;
    bottom: 4px;
    font-family: "Roboto", sans-serif;
    font-size: 44px;
    font-weight: 500;
    letter-spacing: -1px;
    color: #fff;
    text-shadow: 0 0 3px rgba(0,0,0,.55);
}
.map-type {
    position: absolute;
    left: 172px;
    bottom: 19px;
    display: flex;
    height: 80px;
    background: #fff;
    border-radius: 4px;
    box-shadow: 0 1px 5px rgba(0,0,0,.2);
    font-family: "Roboto", sans-serif;
    font-size: 36px;
    color: #565656;
}
.map-type-btn {
    display: flex;
    align-items: center;
    justify-content: center;
    width: 197px;
}
.map-type-btn.selected {
    width: 139px;
    font-weight: 500;
    color: #000;
    border-right: 1px solid #e6e6e6;
}
.zoom-ctrl {
    position: absolute;
    right: 20px;
    bottom: 47px;
    display: flex;
    flex-direction: column;
    align-items: center;
    width: 79px;
    height: 162px;
    background: #fff;
    border-radius: 4px;
    box-shadow: 0 1px 5px rgba(0,0,0,.2);
}
.zoom-btn {
    position: relative;
    display: block;
    width: 100%;
    height: 80px;
}
.zoom-div {
    width: 60px;
    height: 2px;
    background: #e6e6e6;
}
.zoom-h {
    position: absolute;
    left: 21px;
    top: 36px;
    width: 37px;
    height: 9px;
    background: #666;
}
.zoom-v {
    position: absolute;
    left: 35px;
    top: 22px;
    width: 9px;
    height: 37px;
    background: #666;
}
.map-footer {
    position: absolute;
    right: 0;
    bottom: 0;
    display: flex;
    align-items: center;
    gap: 24px;
    height: 30px;
    padding: 2px 11px 0;
    background: rgba(245,245,245,.6);
    font-family: "Roboto", sans-serif;
    font-size: 20px;
    color: #444;
    white-space: nowrap;
}
.map-footer b {
    font-weight: 700;
}
.scale {
    display: flex;
    align-items: center;
    gap: 9px;
}
.scale-bar {
    width: 73px;
    height: 12px;
    margin-top: 5px;
    border: 3px solid #666;
    border-top: 0;
}
.bottom-shade {
    position: absolute;
    left: 0;
    right: 0;
    bottom: 0;
    height: 84px;
    background: linear-gradient(to bottom, rgba(225,225,225,0) 0, #e4e4e4 75px, #cfcfcf 75px, #cfcfcf 84px);
    -webkit-mask-image: linear-gradient(to right, #0004 60px, #000 450px, #000 2300px, #0002 2780px);
    mask-image: linear-gradient(to right, #0004 60px, #000 450px, #000 2300px, #0002 2780px);
}
```
